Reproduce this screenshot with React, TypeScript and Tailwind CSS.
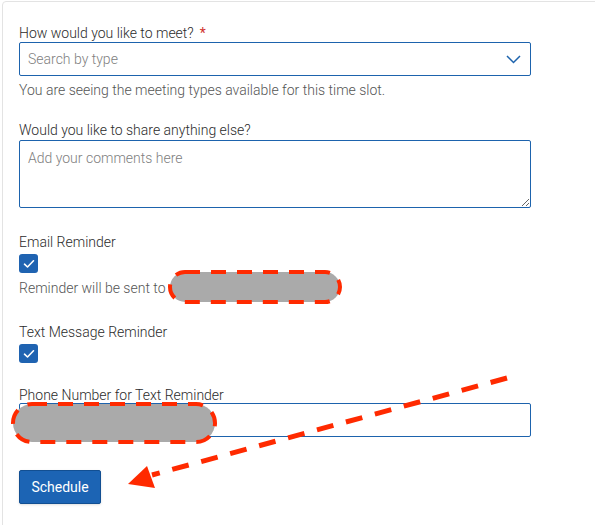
import React from "react";

function Check() {
  return (
    <div className="w-[19px] h-[19px] rounded-[3px] bg-[#1f63b1] flex items-center justify-center">
      <svg width="12" height="10" viewBox="0 0 12 10" fill="none">
        <path d="M1.5 5.2 L4.5 8 L10.5 1.8" stroke="white" strokeWidth="1.6" strokeLinecap="round" strokeLinejoin="round" />
      </svg>
    </div>
  );
}

export default function App() {
  return (
    <div className="relative w-[595px] h-[525px] overflow-hidden bg-white" style={{ fontFamily: "Roboto, 'Liberation Sans', sans-serif" }}>
      <div className="ml-[2px] mt-[1px] w-[640px] h-[600px] border border-[#e3e3e3] rounded-tl-[4px] pl-[16px] pt-[23px] text-[14px] leading-[16px] font-light text-[#2b2b2b]">
        <div className="w-[512px]">
          <div className="mb-[1px]">
            How would you like to meet?<span className="ml-[6px] text-[#d0312d] font-normal">*</span>
          </div>
          <div className="h-[34px] border border-[#1d63ad] rounded-[2px] flex items-center justify-between pl-[8px] pr-[9px]">
            <span className="text-[#808080]">Search by type</span>
            <svg width="15" height="9" viewBox="0 0 15 9" fill="none">
              <path d="M1 1 L7.5 7.5 L14 1" stroke="#1d63ad" strokeWidth="1.5" />
            </svg>
          </div>
          <div className="mt-[6px] text-[#555]">You are seeing the meeting types available for this time slot.</div>

          <div className="mt-[24px] mb-[2px]">Would you like to share anything else?</div>
          <textarea
            className="block w-[512px] h-[68px] border border-[#1d63ad] rounded-[2px] px-[8px] py-[9px] text-[14px] leading-[16px] font-light placeholder:text-[#808080] outline-none"
            placeholder="Add your comments here"
          />

          <div className="mt-[26px]">Email Reminder</div>
          <div className="mt-[4px]">
            <Check />
          </div>
          <div className="mt-[7px] text-[#555]">Reminder will be sent to</div>

          <div className="mt-[28px]">Text Message Reminder</div>
          <div className="mt-[4px]">
            <Check />
          </div>

          <div className="mt-[24px]">Phone Number for Text Reminder</div>
          <div className="h-[34px] border border-[#1d63ad] rounded-[2px]" />

          <button className="mt-[33px] h-[34px] w-[82px] rounded-[2px] bg-[#1c64b4] border border-[#124f92] text-white text-[14px] font-normal shadow-sm">
            Schedule
          </button>
        </div>
      </div>

      <svg className="absolute left-0 top-0 pointer-events-none" width="595" height="525" viewBox="0 0 595 525">
        <rect x="170" y="272" width="170" height="30" rx="15" fill="#aaaaaa" stroke="#ff2a00" strokeWidth="4" strokeDasharray="15 11" />
        <rect x="13" y="404" width="202" height="38" rx="19" fill="#aaaaaa" stroke="#ff2a00" strokeWidth="4" strokeDasharray="15 11" />
        <line x1="507" y1="378" x2="152" y2="475" stroke="#ff2a00" strokeWidth="5" strokeDasharray="17 13" />
        <polygon points="128,484 147,466 155,488" fill="#ff2a00" />
      </svg>
    </div>
  );
}
